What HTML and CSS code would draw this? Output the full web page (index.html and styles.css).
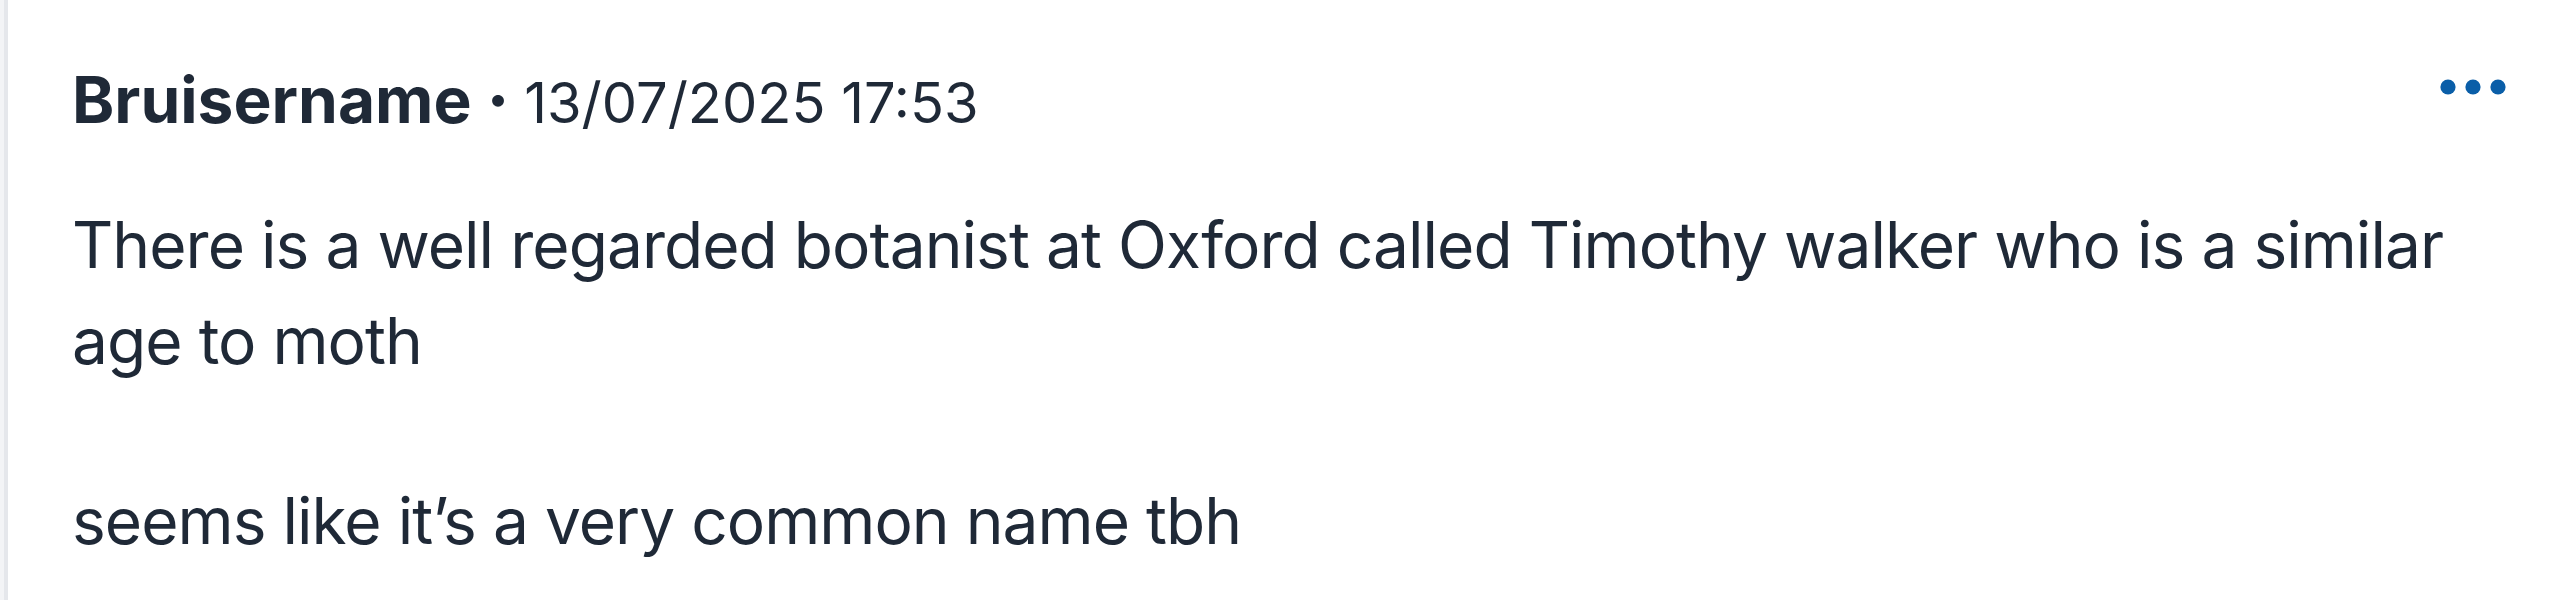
FILE: index.html
```html
<!DOCTYPE html>
<html lang="en">
<head>
<meta charset="utf-8">
<title>Comment</title>
<link rel="stylesheet" href="styles.css">
</head>
<body>
<div class="thread">
  <article class="comment">
    <header class="comment-head">
      <div class="meta">
        <span class="author">Bruisername</span>
        <span class="sep">·</span>
        <time class="date">13/07/2025 17:53</time>
      </div>
      <button class="more" type="button" aria-label="More options">
        <svg width="66" height="16" viewBox="0 0 66 16" aria-hidden="true">
          <circle cx="8" cy="8" r="7.6"/>
          <circle cx="33" cy="8" r="7.6"/>
          <circle cx="58" cy="8" r="7.6"/>
        </svg>
      </button>
    </header>
    <div class="comment-body">
      <p>There is a well regarded botanist at Oxford called Timothy walker who is a similar age to moth</p>
      <p>seems like it’s a very common name tbh</p>
    </div>
  </article>
</div>
</body>
</html>
```
FILE: styles.css
```css
html, body {
  margin: 0;
  padding: 0;
  background: #ffffff;
}

body {
  font-family: Inter, "Liberation Sans", sans-serif;
  color: #1f2937;
}

.thread {
  border-left: 4px solid #f3f4f6;
  min-height: 600px;
  box-sizing: border-box;
}

.comment {
  border-left: 4px solid #e5e7eb;
  padding: 52px 48px 0 64px;
  min-height: 600px;
  box-sizing: border-box;
}

.comment-head {
  display: flex;
  justify-content: space-between;
  align-items: flex-start;
  margin-bottom: 46px;
}

.meta {
  display: flex;
  align-items: baseline;
  gap: 15px;
  font-size: 64px;
  line-height: 96px;
}

.author {
  font-weight: 700;
}

.sep {
  font-size: 64px;
  font-weight: 800;
}

.date {
  font-size: 56px;
  font-weight: 400;
}

.more {
  background: none;
  border: 0;
  padding: 0;
  margin-top: 27px;
  fill: #0a5ea8;
  display: flex;
}

.comment-body {
  font-size: 64px;
  line-height: 96px;
  letter-spacing: -0.015em;
  padding-right: 16px;
}

.comment-body p {
  margin: 0;
}

.comment-body p + p {
  margin-top: 84px;
}
```
